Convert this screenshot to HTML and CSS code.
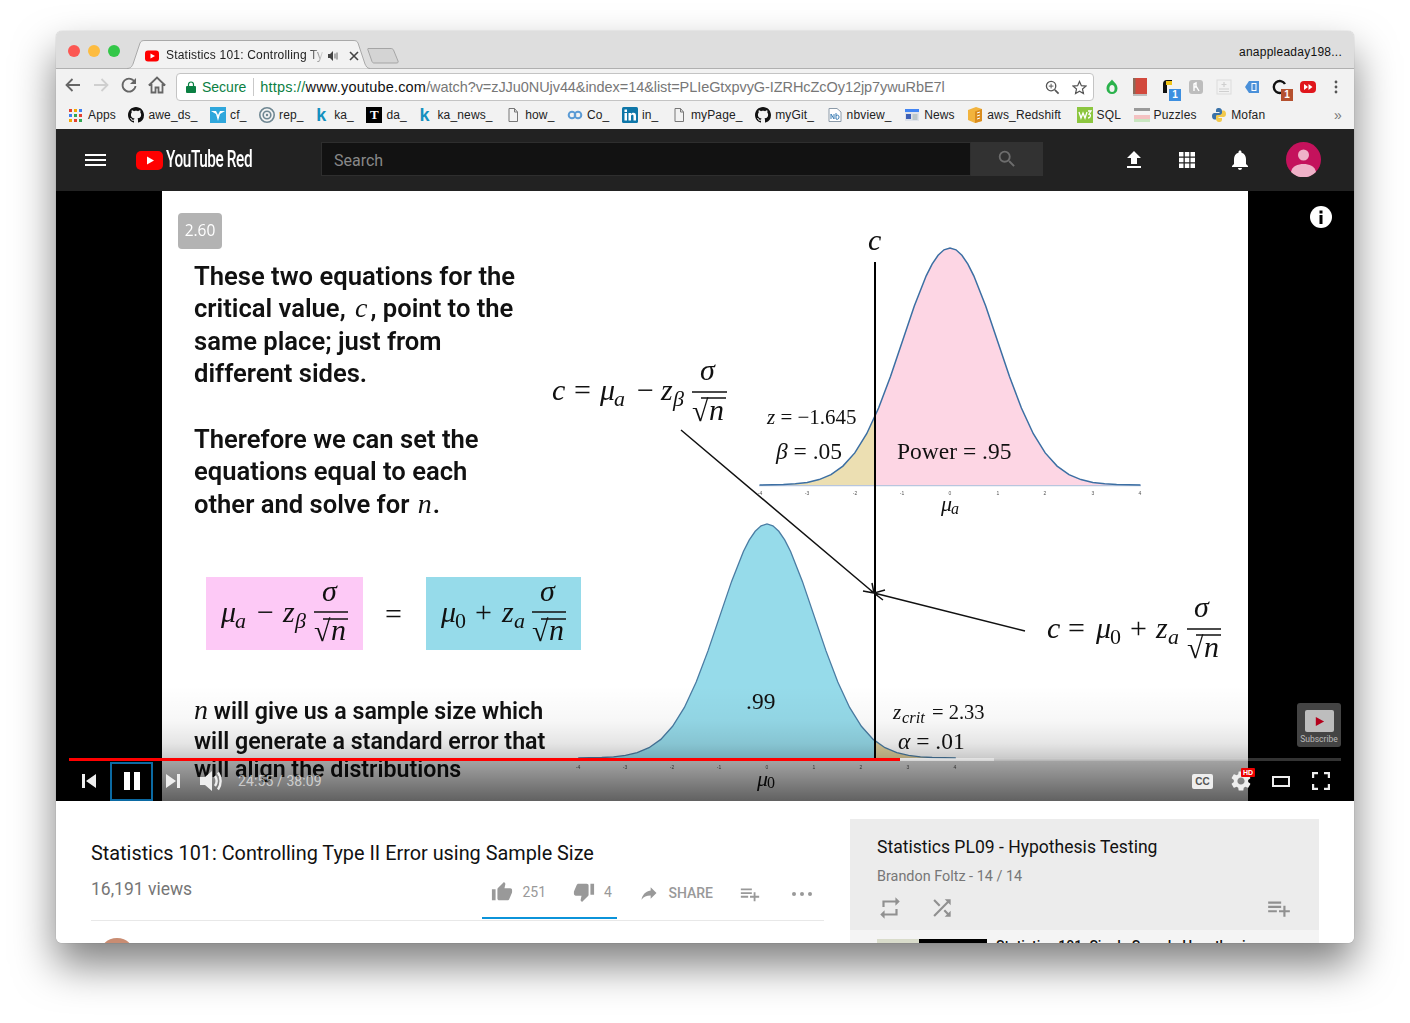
FILE: index.html
```html
<!DOCTYPE html>
<html lang="en">
<head>
<meta charset="utf-8">
<title>Statistics 101: Controlling Type II Error using Sample Size</title>
<link rel="stylesheet" href="styles.css">
</head>
<body>
<div class="window">
  <div class="tabstrip">
    <div class="lights"><span class="light red"></span><span class="light yellow"></span><span class="light green"></span></div>
    <div class="tab">
      <svg class="tab-shape" viewBox="0 0 243 29" preserveAspectRatio="none"><path d="M0 28.5C4 28.5 5 26 6 24L13 3C14 1 15 .5 18 .5H226C229 .5 230 1 231 3L238 24C239 26 240 28.5 243 28.5" fill="#f2f2f2" stroke="#a9a9a9"/></svg>
      <svg class="tab-fav" viewBox="0 0 14 14"><rect y="1.5" width="14" height="11" rx="3" fill="#f00"/><path d="M5.5 4.5v5L10 7z" fill="#fff"/></svg>
      <span class="tab-title">Statistics 101: Controlling Ty</span>
      <svg class="tab-audio" viewBox="0 0 12 12"><path d="M1 4h2l3-3v10L3 8H1z" fill="#444"/><path d="M8 3.500v5M10 2.500v7" stroke="#666" fill="none"/></svg>
      <svg class="tab-close" viewBox="0 0 10 10"><path d="M1 1l8 8M9 1l-8 8" stroke="#444" stroke-width="1.600"/></svg>
    </div>
    <svg class="newtab" viewBox="0 0 32 17"><path d="M1 1.500H24C25 1.500 26 2 26.500 3L31 14C31.500 15.500 31 16 29 16H7C6 16 5.500 15.500 5 14.500L.8 2.500C.6 2 .6 1.500 1 1.500z" fill="#d4d4d4" stroke="#a5a5a5"/></svg>
    <span class="profile">anappleaday198...</span>
  </div>

  <div class="toolbar">
    <div class="nav">
      <svg class="nav-btn" viewBox="0 0 18 18"><path d="M16 9H3M8.500 3L2.500 9l6 6" fill="none" stroke="#666" stroke-width="1.800"/></svg>
      <svg class="nav-btn" viewBox="0 0 18 18"><path d="M2 9h13M9.500 3l6 6-6 6" fill="none" stroke="#cfcfcf" stroke-width="1.800"/></svg>
      <svg class="nav-btn" viewBox="0 0 18 18"><path d="M15 6.500A6.500 6.500 0 1 0 15.500 10" fill="none" stroke="#666" stroke-width="1.800"/><path d="M16 2v6h-6z" fill="#666"/></svg>
      <svg class="nav-btn" viewBox="0 0 18 18"><path d="M.8 9.500L9 1.500l8.200 8M3.500 8v8.500h4v-5h3v5h4V8" fill="none" stroke="#666" stroke-width="1.800"/></svg>
    </div>
    <div class="omnibox">
      <svg class="lock" viewBox="0 0 10 12"><path d="M2.500 5V3.500a2.500 2.500 0 0 1 5 0V5" fill="none" stroke="#0b8043" stroke-width="1.200"/><rect y="5" width="10" height="7" rx="1" fill="#0b8043"/></svg>
      <span class="secure">Secure</span>
      <span class="omni-sep"></span>
      <span class="url"><span class="url-scheme">https://</span><span class="url-host">www.youtube.com</span>/watch?v=zJJu0NUjv44&amp;index=14&amp;list=PLIeGtxpvyG-IZRHcZcOy12jp7ywuRbE7l</span>
      <svg class="omni-icon" viewBox="0 0 16 16"><circle cx="6.500" cy="6.500" r="5" fill="none" stroke="#555" stroke-width="1.400"/><path d="M10.500 10.500l4 4" stroke="#555" stroke-width="1.800"/><path d="M4 6.500h5M6.500 4v5" stroke="#555"/></svg>
      <svg class="omni-icon" viewBox="0 0 16 16"><path d="M8 1.500l2 4.500 4.800.5-3.600 3.200 1 4.800L8 12l-4.200 2.500 1-4.800L1.200 6.500 6 6z" fill="none" stroke="#555" stroke-width="1.300"/></svg>
    </div>
    <div class="extensions">
      <span class="ext"><svg viewBox="0 0 16 16"><path d="M8 .5C9 2.500 13.500 4.500 13.500 9.500A5.500 5.500 0 0 1 2.500 9.500C2.500 4.500 7 2.500 8 .5z" fill="#2bb24c"/><ellipse cx="8" cy="9.500" rx="2.600" ry="3.600" fill="#f2f2f2"/></svg></span>
      <span class="ext"><svg class="ext-tall" viewBox="0 0 14 18"><rect x="0" y="0" width="14" height="16" fill="#d2493d"/><rect x="0" y="0" width="2.500" height="16" fill="#8a6a58"/><rect x="0" y="16" width="14" height="2" fill="#bdbdbd"/></svg></span>
      <span class="ext"><svg viewBox="0 0 16 16"><path d="M3 14V5a4 4 0 0 1 4-4h5v5H7v8z" fill="#111"/><rect x="6" y="2" width="6" height="4" fill="#f0c419"/></svg><b class="badge blue">1</b></span>
      <span class="ext"><svg viewBox="0 0 16 16"><rect x="1" y="1" width="14" height="14" rx="3" fill="#bdbdbd"/><path d="M6 12V5l2-1v3l3 5M6 8h3" fill="none" stroke="#fff" stroke-width="1.400"/></svg></span>
      <span class="ext"><svg viewBox="0 0 16 16"><rect x="1" y="1" width="14" height="14" fill="#f2f2f2" stroke="#dcdcdc"/><path d="M8 3v5M5.500 5.500h5M3 10h10M3 12.500h10" stroke="#cfcfcf" stroke-width="1.200"/></svg></span>
      <span class="ext"><svg viewBox="0 0 16 16"><path d="M5 2h10v12H5L1 8z" fill="#4a90d9"/><rect x="8" y="4.500" width="4" height="7" fill="none" stroke="#fff"/></svg></span>
      <span class="ext"><svg viewBox="0 0 16 16"><path d="M13 5A6 6 0 1 0 13 11" fill="none" stroke="#111" stroke-width="2.400"/></svg><b class="badge rust">1</b></span>
      <span class="ext"><svg viewBox="0 0 16 16"><rect x="0" y="2" width="16" height="12" rx="4" fill="#e0161c"/><path d="M4 5v6l4-3zM8.500 5v6l4-3z" fill="#fff"/></svg></span>
      <span class="ext"><svg viewBox="0 0 16 16"><circle cx="8" cy="3" r="1.400" fill="#555"/><circle cx="8" cy="8" r="1.400" fill="#555"/><circle cx="8" cy="13" r="1.400" fill="#555"/></svg></span>
    </div>
  </div>

  <div class="bookmarks">
    <span class="bm bm-apps"><svg viewBox="0 0 13 13"><rect width="3" height="3" fill="#e5402f"/><rect x="5" width="3" height="3" fill="#f6a800"/><rect x="10" width="3" height="3" fill="#3e7ff0"/><rect y="5" width="3" height="3" fill="#3e7ff0"/><rect x="5" y="5" width="3" height="3" fill="#31a853"/><rect x="10" y="5" width="3" height="3" fill="#e5402f"/><rect y="10" width="3" height="3" fill="#f6a800"/><rect x="5" y="10" width="3" height="3" fill="#e5402f"/><rect x="10" y="10" width="3" height="3" fill="#31a853"/></svg>Apps</span>
    <span class="bm"><svg viewBox="0 0 16 16"><path fill="#111" d="M8 0C3.580 0 0 3.580 0 8c0 3.540 2.290 6.530 5.470 7.590.4.070.55-.17.55-.38 0-.19-.01-.82-.01-1.490-2.010.37-2.530-.49-2.690-.94-.09-.23-.48-.94-.82-1.130-.28-.15-.68-.52-.01-.53.63-.01 1.080.58 1.230.82.72 1.210 1.870.87 2.330.66.070-.52.28-.87.51-1.070-1.780-.2-3.640-.89-3.640-3.950 0-.87.31-1.590.82-2.150-.08-.2-.36-1.020.08-2.120 0 0 .67-.21 2.200.82.64-.18 1.320-.27 2-.27s1.360.09 2 .27c1.530-1.040 2.200-.82 2.200-.82.44 1.100.16 1.920.08 2.120.51.56.82 1.270.82 2.150 0 3.070-1.870 3.750-3.650 3.950.29.25.54.73.54 1.480 0 1.070-.01 1.930-.01 2.200 0 .21.15.46.55.38A8.010 8.010 0 0016 8c0-4.420-3.580-8-8-8z"/></svg>awe_ds_</span>
    <span class="bm"><svg viewBox="0 0 16 16"><rect width="16" height="16" fill="#2fa7dc"/><path d="M1 4h5l2 4 2-4h5l-5 3-2 7-2-7z" fill="#fff"/></svg>cf_</span>
    <span class="bm"><svg viewBox="0 0 16 16"><circle cx="8" cy="8" r="7.200" fill="none" stroke="#6f8792" stroke-width="1.600"/><circle cx="8" cy="8" r="3.800" fill="none" stroke="#6f8792" stroke-width="1.600"/><circle cx="8" cy="8" r="1.200" fill="#6f8792"/></svg>rep_</span>
    <span class="bm"><i class="k-mark">k</i>ka_</span>
    <span class="bm"><i class="t-mark">T</i>da_</span>
    <span class="bm"><i class="k-mark">k</i>ka_news_</span>
    <span class="bm"><svg class="page" viewBox="0 0 14 16"><path d="M3 1.500h5.500L11.500 5v9.500H3z M8.500 1.500V5h3" fill="none" stroke="#777"/></svg>how_</span>
    <span class="bm"><svg viewBox="0 0 16 16"><circle cx="5" cy="8" r="3.300" fill="none" stroke="#5b9bd5" stroke-width="2"/><circle cx="11" cy="8" r="3.300" fill="none" stroke="#5b9bd5" stroke-width="2"/></svg>Co_</span>
    <span class="bm"><svg viewBox="0 0 16 16"><rect width="16" height="16" rx="1.500" fill="#0e76a8"/><rect x="2.500" y="6" width="2.500" height="7.500" fill="#fff"/><rect x="2.500" y="2.500" width="2.500" height="2.500" fill="#fff"/><path d="M6.500 6H9v1.200C9.600 6.300 10.500 5.800 11.500 5.800c1.700 0 2.500 1.200 2.500 3v4.700h-2.500V9.200c0-.9-.4-1.400-1.200-1.400S9 8.400 9 9.200v4.300H6.500z" fill="#fff"/></svg>in_</span>
    <span class="bm"><svg class="page" viewBox="0 0 14 16"><path d="M3 1.500h5.500L11.500 5v9.500H3z M8.500 1.500V5h3" fill="none" stroke="#777"/></svg>myPage_</span>
    <span class="bm"><svg viewBox="0 0 16 16"><path fill="#111" d="M8 0C3.580 0 0 3.580 0 8c0 3.540 2.290 6.530 5.470 7.590.4.070.55-.17.55-.38 0-.19-.01-.82-.01-1.490-2.010.37-2.530-.49-2.690-.94-.09-.23-.48-.94-.82-1.130-.28-.15-.68-.52-.01-.53.63-.01 1.080.58 1.230.82.72 1.210 1.870.87 2.330.66.070-.52.28-.87.51-1.070-1.780-.2-3.640-.89-3.640-3.950 0-.87.31-1.590.82-2.150-.08-.2-.36-1.020.08-2.120 0 0 .67-.21 2.200.82.64-.18 1.320-.27 2-.27s1.360.09 2 .27c1.530-1.040 2.200-.82 2.200-.82.44 1.100.16 1.920.08 2.120.51.56.82 1.270.82 2.150 0 3.070-1.870 3.750-3.650 3.950.29.25.54.73.54 1.480 0 1.070-.01 1.930-.01 2.200 0 .21.15.46.55.38A8.010 8.010 0 0016 8c0-4.420-3.580-8-8-8z"/></svg>myGit_</span>
    <span class="bm"><svg viewBox="0 0 16 16"><path d="M2 1.500h8L14 5v9.500H2z" fill="#fff" stroke="#8c9aa8"/><path d="M4 12V7l3 5V7M9 6v6c2 1 3-.5 3-2s-1-2.500-3-1.500" fill="none" stroke="#3f7fb5"/></svg>nbview_</span>
    <span class="bm"><svg viewBox="0 0 16 16"><rect x="1" y="2" width="14" height="3" fill="#4285f4"/><rect x="1" y="5" width="14" height="9" fill="#dfe3ea"/><rect x="2" y="7" width="5" height="5" fill="#3d5fb5"/><path d="M8.500 8h5M8.500 10h5M8.500 12h5" stroke="#9aa"/></svg>News</span>
    <span class="bm"><svg viewBox="0 0 16 16"><path d="M1 3l8-3 6 2v12l-7 2-7-3z" fill="#f2b33d"/><path d="M8 4.500l7-2.500v12l-7 2z" fill="#d98c1f"/><path d="M10 6l3-1M10 9l3-1M10 12l3-1" stroke="#fff"/></svg>aws_Redshift</span>
    <span class="bm bm-wide"><svg viewBox="0 0 16 16"><rect width="16" height="16" fill="#8cc63f"/><path d="M2 5l2 6 2-5 2 5 2-6M11 4h3l-2 3c2 0 2 4-1 4" fill="none" stroke="#fff" stroke-width="1.300"/></svg>SQL</span>
    <span class="bm"><svg viewBox="0 0 16 16"><rect y="1" width="16" height="3" fill="#9a9a9a"/><rect y="4" width="16" height="4" fill="#f5f5f5"/><rect y="8" width="16" height="4" fill="#f4c2c2"/><rect y="12" width="16" height="3" fill="#c8e6c0"/></svg>Puzzles</span>
    <span class="bm bm-mofan"><svg viewBox="0 0 16 16"><path d="M8 1C5 1 5 2.500 5 4v1h3.500v1H3.500C2 6 1 7 1 9s1 3.500 2.500 3.500H5V10.500C5 9 6 8 7.500 8h2C11 8 11 7 11 6V4c0-1.500-1-3-3-3z" fill="#3a72a8"/><path d="M8 15c3 0 3-1.500 3-3v-1H7.500v-1h5C14 10 15 9 15 7s-1-3.500-2.500-3.500H11V5.500C11 7 10 8 8.500 8h-2C5 8 5 9 5 10v2c0 1.500 1 3 3 3z" fill="#f2c94c"/></svg>Mofan</span>
    <span class="bm-more">»</span>
  </div>

  <header class="yt-header">
    <svg class="burger" viewBox="0 0 21 12"><path d="M0 1h21M0 6h21M0 11h21" stroke="#fff" stroke-width="2"/></svg>
    <div class="logo">
      <svg class="logo-mark" viewBox="0 0 27 19"><rect width="27" height="19" rx="5" fill="#f00"/><path d="M11 5.500v8l7-4z" fill="#fff"/></svg>
      <span class="logo-text">YouTube Red</span>
    </div>
    <div class="search">
      <span class="search-input">Search</span>
      <span class="search-btn"><svg viewBox="0 0 24 24"><path fill="#6d6d6d" d="M15.500 14h-.79l-.28-.27A6.470 6.470 0 0 0 16 9.500 6.500 6.500 0 1 0 9.500 16c1.610 0 3.090-.59 4.230-1.570l.27.28v.79l5 4.990L20.490 19l-4.990-5zm-6 0C7.010 14 5 11.990 5 9.500S7.010 5 9.500 5 14 7.010 14 9.500 11.990 14 9.500 14z"/></svg></span>
    </div>
    <div class="header-icons">
      <svg viewBox="0 0 24 24"><path fill="#fff" d="M9 16h6v-6h4l-7-7-7 7h4zm-4 2h14v2H5z"/></svg>
      <svg viewBox="0 0 24 24"><path fill="#fff" d="M4 4h4.500v4.500H4zM9.800 4h4.500v4.500H9.800zM15.500 4H20v4.500h-4.500zM4 9.800h4.500v4.500H4zM9.800 9.800h4.500v4.500H9.800zM15.500 9.800H20v4.500h-4.500zM4 15.500h4.500V20H4zM9.800 15.500h4.500V20H9.800zM15.500 15.500H20V20h-4.500z"/></svg>
      <svg viewBox="0 0 24 24"><path fill="#fff" d="M12 22c1.100 0 2-.9 2-2h-4c0 1.100.9 2 2 2zm6-6v-5c0-3.070-1.630-5.640-4.500-6.320V4c0-.83-.67-1.500-1.500-1.500s-1.500.67-1.500 1.500v.68C7.640 5.360 6 7.920 6 11v5l-2 2v1h16v-1l-2-2z"/></svg>
      <svg class="avatar-me" viewBox="0 0 35 35"><circle cx="17.500" cy="17.500" r="17.500" fill="#c4125c"/><circle cx="17.500" cy="13" r="5.500" fill="#efb2c8"/><path d="M5 30c1-6 7-8 12.500-8S29 24 30 30a17.500 17.500 0 0 1-25 0z" fill="#efb2c8"/></svg>
    </div>
  </header>

  <section class="player">
    <svg class="slide" viewBox="162 191 1086 610">
      <defs>
        <path id="curve-a" d="M759.600 485L783.400 484.500 795.300 483.800 807.200 482.400 819.100 479.600 831 474.600 842.900 466.100 854.800 452.900 866.700 433.700 878.600 408 890.500 376.500 902.400 341.300 914.300 306.100 926.200 275.800 932.100 264.100 938.100 255.300 944 249.800 950 248 956 249.800 961.900 255.300 967.900 264.100 973.800 275.800 985.700 306.100 997.600 341.300 1009.500 376.500 1021.400 408 1033.300 433.700 1045.200 452.900 1057.100 466.100 1069 474.600 1080.900 479.600 1092.800 482.400 1104.700 483.800 1116.600 484.500 1140.400 485"/>
        <path id="curve-b" d="M578.200 758L601.800 757.500 613.600 756.800 625.400 755.400 637.200 752.700 649 747.700 660.800 739.400 672.600 726.300 684.400 707.400 696.200 682 708 650.900 719.800 616.100 731.600 581.400 743.400 551.500 749.300 539.900 755.200 531.300 761.100 525.800 767 524 772.900 525.800 778.800 531.300 784.700 539.900 790.600 551.500 802.400 581.400 814.200 616.100 826 650.900 837.800 682 849.600 707.400 861.400 726.300 873.200 739.400 885 747.700 896.800 752.700 908.600 755.400 920.400 756.800 932.200 757.500 955.800 758"/>
        <clipPath id="left-of-c"><rect x="500" y="200" width="375" height="600"/></clipPath>
        <clipPath id="right-of-c"><rect x="875" y="200" width="375" height="600"/></clipPath>
      </defs>
      <rect x="162" y="191" width="1086" height="610" fill="#fff"/>

      <rect class="badge-bg" x="178" y="213" width="44" height="36" rx="4"/>
      <text class="badge-text" x="200" y="236">2.60</text>

      <text class="lead" x="194" y="285">These two equations for the</text>
      <text class="lead" x="194" y="317">critical value, <tspan class="lead-math" dx="3">c</tspan><tspan dx="3">, point to the</tspan></text>
      <text class="lead" x="194" y="350">same place; just from</text>
      <text class="lead" x="194" y="382">different sides.</text>
      <text class="lead" x="194" y="448">Therefore we can set the</text>
      <text class="lead" x="194" y="480">equations equal to each</text>
      <text class="lead" x="194" y="513">other and solve for <tspan class="lead-math" dx="2">n</tspan><tspan dx="1">.</tspan></text>
      <text class="lead-sm" x="194" y="719"><tspan class="lead-math">n</tspan> will give us a sample size which</text>
      <text class="lead-sm" x="194" y="749">will generate a standard error that</text>
      <text class="lead-sm" x="194" y="777">will align the distributions</text>

      <rect x="206" y="577" width="157" height="73" fill="#fdc9f6"/>
      <rect x="426" y="577" width="155" height="73" fill="#96dbea"/>
      <text class="m big" x="221" y="622">μ</text><text class="m sub" x="235" y="628">a</text>
      <text class="u big" x="257" y="622">−</text>
      <text class="m big" x="283" y="622">z</text><text class="m sub" x="295" y="628">β</text>
      <text class="m big" x="322" y="601">σ</text><path class="rule" d="M314 612h34M323 619h25"/>
      <text class="u big" x="314" y="641">√</text><text class="m big" x="331" y="640">n</text>
      <text class="u big" x="385" y="624">=</text>
      <text class="m big" x="441" y="622">μ</text><text class="u sub" x="455" y="628">0</text>
      <text class="u big" x="475" y="622">+</text>
      <text class="m big" x="502" y="622">z</text><text class="m sub" x="514" y="628">a</text>
      <text class="m big" x="540" y="601">σ</text><path class="rule" d="M532 612h34M541 619h25"/>
      <text class="u big" x="532" y="641">√</text><text class="m big" x="549" y="640">n</text>

      <path d="M759 485.500H1141" stroke="#b8c6de" stroke-width="1.500"/>
      <use href="#curve-a" fill="#fdd6e4" clip-path="url(#right-of-c)"/>
      <use href="#curve-a" fill="#ecdfb2" clip-path="url(#left-of-c)"/>
      <use href="#curve-a" fill="none" stroke="#3c6fa3" stroke-width="1.500"/>
      <use href="#curve-b" fill="#96dbea" clip-path="url(#left-of-c)"/>
      <use href="#curve-b" fill="#dfcf9c" clip-path="url(#right-of-c)"/>
      <use href="#curve-b" fill="none" stroke="#4a7ca3" stroke-width="1.300"/>

      <g class="ticks">
        <text x="760" y="495">-4</text><text x="807" y="495">-3</text><text x="855" y="495">-2</text><text x="902" y="495">-1</text><text x="950" y="495">0</text><text x="998" y="495">1</text><text x="1045" y="495">2</text><text x="1093" y="495">3</text><text x="1140" y="495">4</text>
        <text x="578" y="769">-4</text><text x="625" y="769">-3</text><text x="672" y="769">-2</text><text x="719" y="769">-1</text><text x="767" y="769">0</text><text x="814" y="769">1</text><text x="861" y="769">2</text><text x="908" y="769">3</text><text x="955" y="769">4</text>
      </g>

      <path d="M875 262V758" stroke="#000" stroke-width="2"/>
      <path class="arrow" d="M681 430L874 593M863 591L874 593 872 583M1025 631L874 593M885 590L874 593 883 600"/>

      <text class="m big" x="868" y="250">c</text>
      <text class="m big" x="552" y="400">c</text><text class="u big" x="574" y="400">=</text>
      <text class="m big" x="600" y="400">μ</text><text class="m sub" x="614" y="406">a</text>
      <text class="u big" x="637" y="400">−</text>
      <text class="m big" x="661" y="400">z</text><text class="m sub" x="673" y="406">β</text>
      <text class="m big" x="700" y="380">σ</text><path class="rule" d="M692 392h35M701 398h25"/>
      <text class="u big" x="692" y="421">√</text><text class="m big" x="709" y="420">n</text>

      <text class="m big" x="1047" y="638">c</text><text class="u big" x="1068" y="638">=</text>
      <text class="m big" x="1096" y="638">μ</text><text class="u sub" x="1110" y="644">0</text>
      <text class="u big" x="1130" y="638">+</text>
      <text class="m big" x="1156" y="638">z</text><text class="m sub" x="1168" y="644">a</text>
      <text class="m big" x="1194" y="617">σ</text><path class="rule" d="M1187 629h34M1196 635h25"/>
      <text class="u big" x="1187" y="658">√</text><text class="m big" x="1204" y="657">n</text>

      <text class="u note" x="767" y="424"><tspan class="i">z</tspan> = −1.645</text>
      <text class="u lab" x="776" y="459"><tspan class="i">β</tspan> = .05</text>
      <text class="u lab" x="897" y="459">Power = .95</text>
      <text class="m lab-mu" x="941" y="511">μ</text><text class="m lab-sub" x="951" y="514">a</text>
      <text class="u lab" x="746" y="709">.99</text>
      <text class="m note" x="893" y="719">z</text><text class="m crit" x="902" y="723">crit</text><text class="u crit-eq" x="932" y="719">= 2.33</text>
      <text class="u lab" x="898" y="749"><tspan class="i">α</tspan> = .01</text>
      <text class="m lab-mu" x="757" y="786">μ</text><text class="u lab-sub" x="767" y="788">0</text>
    </svg>

    <div class="shade"></div>

    <svg class="info" viewBox="0 0 24 24"><circle cx="12" cy="12" r="11" fill="#fff"/><rect x="10.500" y="10" width="3" height="9" fill="#000"/><rect x="10.500" y="5.500" width="3" height="3" fill="#000"/></svg>

    <div class="watermark">
      <span class="wm-box"><svg viewBox="0 0 12 12"><path d="M2 1v10l9-5z" fill="#b3001b"/></svg></span>
      <span class="wm-label">Subscribe</span>
    </div>

    <div class="chrome">
      <div class="progress">
        <span class="buffered"></span>
        <span class="played"></span>
      </div>
      <div class="controls">
        <svg class="ctl-prev" viewBox="0 0 16 14"><path d="M1 0h3v14H1zM15 0v14L5 7z" fill="#eee"/></svg>
        <span class="ctl-pause"><svg viewBox="0 0 16 18"><path d="M0 0h6v18H0zM10 0h6v18h-6z" fill="#fff"/></svg></span>
        <svg class="ctl-next" viewBox="0 0 16 14"><path d="M1 0v14l10-7zM12 0h3v14h-3z" fill="#eee"/></svg>
        <svg class="ctl-vol" viewBox="0 0 22 20"><path d="M0 6h5l7-6v20l-7-6H0z" fill="#eee"/><path d="M15 5c2 3 2 7 0 10M18 1.500c3.500 5 3.500 12 0 17" fill="none" stroke="#eee" stroke-width="2.400"/></svg>
        <span class="ctl-time">24:55 / 38:09</span>
        <span class="ctl-right">
          <span class="ctl-cc">CC</span>
          <span class="ctl-gear"><svg viewBox="0 0 24 24"><path fill="#eee" d="M19.140 12.940c.04-.3.06-.61.06-.94 0-.32-.02-.64-.07-.94l2.030-1.580c.18-.14.23-.41.12-.61l-1.920-3.320c-.12-.22-.37-.29-.59-.22l-2.390.96c-.5-.38-1.030-.7-1.620-.94l-.36-2.540c-.04-.24-.24-.41-.48-.41h-3.840c-.24 0-.43.17-.47.41l-.36 2.540c-.59.24-1.130.57-1.620.94l-2.390-.96c-.22-.08-.47 0-.59.22L2.740 8.870c-.12.21-.08.47.12.61l2.030 1.580c-.05.3-.09.63-.09.94s.02.64.07.94l-2.030 1.580c-.18.14-.23.41-.12.61l1.920 3.320c.12.22.37.29.59.22l2.390-.96c.5.38 1.030.7 1.620.94l.36 2.540c.05.24.24.41.48.41h3.840c.24 0 .44-.17.47-.41l.36-2.540c.59-.24 1.130-.56 1.620-.94l2.390.96c.22.08.47 0 .59-.22l1.920-3.320c.12-.22.07-.47-.12-.61l-2.010-1.580zM12 15.600c-1.980 0-3.600-1.620-3.600-3.600s1.620-3.600 3.600-3.600 3.600 1.620 3.600 3.600-1.620 3.600-3.600 3.600z"/></svg><b class="hd">HD</b></span>
          <span class="ctl-theater"></span>
          <svg class="ctl-full" viewBox="0 0 18 18"><path d="M1 6V1h5M12 1h5v5M17 12v5h-5M6 17H1v-5" fill="none" stroke="#eee" stroke-width="2.400"/></svg>
        </span>
      </div>
    </div>
  </section>

  <main class="below">
    <div class="primary">
      <h1 class="video-title">Statistics 101: Controlling Type II Error using Sample Size</h1>
      <div class="stats">
        <span class="views">16,191 views</span>
        <div class="actions">
          <div class="sentiment">
            <svg class="act-thumb" viewBox="0 0 24 24"><path d="M1 21h4V9H1v12zm22-11c0-1.100-.9-2-2-2h-6.310l.95-4.570.03-.32c0-.41-.17-.79-.44-1.060L14.170 1 7.590 7.590C7.220 7.950 7 8.450 7 9v10c0 1.100.9 2 2 2h9c.83 0 1.540-.5 1.840-1.220l3.020-7.050c.09-.23.14-.47.14-.73v-2z"/></svg>
            <span class="act-count like">251</span>
            <svg class="act-thumb" viewBox="0 0 24 24"><path d="M15 3H6c-.83 0-1.540.5-1.840 1.220l-3.020 7.050c-.09.23-.14.47-.14.73v2c0 1.100.9 2 2 2h6.310l-.95 4.570-.03.32c0 .41.17.79.44 1.060L9.830 23l6.590-6.590c.36-.36.58-.86.58-1.410V5c0-1.100-.9-2-2-2zm4 0v12h4V3h-4z"/></svg>
            <span class="act-count">4</span>
          </div>
          <svg class="act-share" viewBox="0 0 24 24"><path d="M14 9V5l7 7-7 7v-4.100c-5 0-8.500 1.600-11 5.100 1-5 4-10 11-11z"/></svg>
          <span class="act-label">SHARE</span>
          <svg class="act-add" viewBox="0 0 24 24"><path d="M14 10H2v2h12v-2zm0-4H2v2h12V6zm4 8v-4h-2v4h-4v2h4v4h2v-4h4v-2h-4zM2 16h8v-2H2v2z"/></svg>
          <svg class="act-more" viewBox="0 0 20 4"><circle cx="2" cy="2" r="2"/><circle cx="10" cy="2" r="2"/><circle cx="18" cy="2" r="2"/></svg>
        </div>
      </div>
      <div class="owner-avatar"></div>
    </div>
    <aside class="playlist">
      <div class="pl-head">
        <div class="pl-title">Statistics PL09 - Hypothesis Testing</div>
        <div class="pl-sub">Brandon Foltz - 14 / 14</div>
        <div class="pl-tools">
          <svg viewBox="0 0 24 24"><path d="M7 7h10v3l4-4-4-4v3H5v6h2V7zm10 10H7v-3l-4 4 4 4v-3h12v-6h-2v4z"/></svg>
          <svg viewBox="0 0 24 24"><path d="M10.590 9.170L5.410 4 4 5.410l5.170 5.170 1.420-1.410zM14.500 4l2.040 2.040L4 18.590 5.410 20 17.960 7.460 20 9.500V4h-5.500zm.33 9.410l-1.410 1.410 3.130 3.130L14.500 20H20v-5.500l-2.040 2.040-3.130-3.130z"/></svg>
          <svg class="pl-add" viewBox="0 0 24 24"><path d="M14 10H2v2h12v-2zm0-4H2v2h12V6zm4 8v-4h-2v4h-4v2h4v4h2v-4h4v-2h-4zM2 16h8v-2H2v2z"/></svg>
        </div>
      </div>
      <div class="pl-item">
        <span class="pl-thumb"><span class="pl-thumb-slide"></span><span class="pl-thumb-black"></span></span>
        <span class="pl-item-title">Statistics 101: Single Sample Hypothesis</span>
      </div>
    </aside>
  </main>
</div>
</body>
</html>
```

FILE: styles.css
```css
* { box-sizing: border-box; }
html, body { margin: 0; height: 100%; background: #fff; overflow: hidden; }
body { padding: 31px 0 0 56px; font-family: "Liberation Sans", Arial, sans-serif; }

.window {
  width: 1298px;
  height: 912px;
  border-radius: 6px;
  overflow: hidden;
  background: #fff;
  box-shadow: 0 22px 42px rgba(0, 0, 0, .5), 0 0 1px rgba(0, 0, 0, .4);
}

/* browser tab strip */
.tabstrip {
  position: relative;
  display: flex;
  align-items: flex-end;
  height: 38px;
  background: #dedede;
  border-bottom: 1px solid #b0b0b0;
}
.lights { display: flex; gap: 8px; padding-left: 12px; align-self: flex-start; margin-top: 14px; width: 71px; }
.light { width: 12px; height: 12px; border-radius: 50%; }
.light.red { background: #fc5753; }
.light.yellow { background: #fdbc40; }
.light.green { background: #33c748; }
.tab {
  position: relative;
  display: flex;
  align-items: center;
  width: 243px;
  height: 29px;
  margin-bottom: -1px;
  padding: 0 0 0 18px;
  z-index: 1;
}
.tab-shape { position: absolute; inset: 0; width: 100%; height: 100%; }
.tab-fav { position: relative; width: 14px; height: 14px; flex: none; margin-top: 2px; }
.tab-title {
  position: relative;
  width: 162px;
  margin-left: 7px;
  font-size: 12px;
  letter-spacing: .2px;
  color: #222;
  white-space: nowrap;
  -webkit-mask-image: linear-gradient(90deg, #000 88%, transparent 98%);
  mask-image: linear-gradient(90deg, #000 88%, transparent 98%);
}
.tab-audio { position: relative; width: 12px; height: 12px; flex: none; margin-left: -1px; margin-top: 2px; }
.tab-close { position: relative; width: 10px; height: 10px; flex: none; margin-left: 10px; margin-top: 2px; }
.newtab { width: 32px; height: 17px; margin: 0 0 4px -3px; }
.profile { margin-left: auto; align-self: flex-start; margin-top: 14px; padding-right: 12px; font-size: 12px; letter-spacing: .25px; color: #111; }

/* toolbar */
.toolbar { display: flex; align-items: center; height: 32px; background: #f2f2f2; }
.nav { display: flex; padding-left: 3px; }
.nav-btn { width: 18px; height: 18px; margin: 0 5px; }
.omnibox {
  display: flex;
  align-items: center;
  width: 918px;
  height: 28px;
  margin: 4px 0 0 5px;
  padding: 0 6px 0 9px;
  background: #fff;
  border: 1px solid #c4c4c4;
  border-radius: 4px;
  font-size: 14px;
  white-space: nowrap;
}
.lock { width: 10px; height: 12px; flex: none; }
.secure { margin-left: 6px; color: #0b8043; }
.omni-sep { width: 1px; height: 18px; background: #c9c9c9; margin: 0 6px 0 7px; }
.url { color: #777; flex: 1; overflow: hidden; font-size: 14.500px; letter-spacing: -.07px; }
.url-scheme { color: #0b8043; letter-spacing: .2px; }
.url-host { color: #111; letter-spacing: .2px; }
.omni-icon { width: 15px; height: 15px; flex: none; margin-left: 12px; }
.extensions { display: flex; padding-left: 4px; }
.ext { position: relative; display: flex; justify-content: center; align-items: center; width: 28px; height: 28px; margin-top: 4px; }
.ext svg { width: 16px; height: 16px; }
.ext .ext-tall { width: 14px; height: 18px; }
.badge { position: absolute; right: 1px; bottom: 0; width: 12px; height: 12px; font-size: 10px; line-height: 12px; color: #fff; text-align: center; font-weight: 700; }
.badge.blue { background: #3d8fe0; }
.badge.rust { background: #b5512f; }

/* bookmarks */
.bookmarks {
  display: flex;
  align-items: center;
  gap: 12.500px;
  height: 28px;
  padding: 0 12px 0 13px;
  background: #f2f2f2;
  font-size: 12px;
  letter-spacing: .15px;
  color: #222;
  white-space: nowrap;
}
.bm { display: flex; align-items: center; gap: 4px; }
.bm-wide { margin-left: 3px; }
.bm-mofan { margin-left: 2px; }
.bm svg { width: 16px; height: 16px; flex: none; }
.bm-apps svg { width: 13px; height: 13px; margin-right: 2px; }
.k-mark { display: inline-block; width: 12px; font: 700 18px/16px "Liberation Sans", sans-serif; color: #1590bf; font-style: normal; margin-right: 2px; }
.t-mark { display: inline-block; width: 16px; height: 16px; background: #000; color: #fff; font: 700 13px/16px "Liberation Serif", serif; font-style: normal; text-align: center; }
.bm-more { margin-left: auto; color: #777; font-size: 14px; }

/* YouTube masthead */
.yt-header { display: flex; align-items: center; height: 62px; padding-left: 29px; background: #222; }
.burger { width: 21px; height: 12px; flex: none; }
.logo { display: flex; align-items: center; width: 185px; margin-left: 30px; flex: none; }
.logo-mark { width: 27px; height: 19px; flex: none; }
.logo-text {
  margin-left: 3px;
  font: 500 23px/24px Roboto, sans-serif;
  letter-spacing: -.6px;
  color: #fff;
  white-space: nowrap;
  transform: scaleX(.667);
  transform-origin: left center;
}
.search { display: flex; width: 722px; height: 34px; margin-bottom: 2px; flex: none; }
.search-input {
  flex: 1;
  padding: 1px 12px 0;
  background: #121212;
  border: 1px solid #2e2e2e;
  font: 400 16px/34px Roboto, sans-serif;
  color: #888;
}
.search-btn { display: flex; align-items: center; justify-content: center; width: 72px; background: #323232; }
.search-btn svg { width: 22px; height: 22px; }
.header-icons { display: flex; align-items: center; gap: 29px; margin-left: auto; margin-bottom: 1px; padding-right: 33px; }
.header-icons svg { width: 24px; height: 24px; }
.header-icons .avatar-me { width: 35px; height: 35px; margin-left: 5px; }

/* player */
.player { position: relative; display: flex; justify-content: center; height: 610px; background: #000; overflow: hidden; }
.slide { width: 1086px; height: 610px; filter: blur(.3px); }
.shade {
  position: absolute;
  left: 0;
  right: 0;
  bottom: 0;
  height: 115px;
  background: linear-gradient(180deg, rgba(0,0,0,0), rgba(0,0,0,.03) 30%, rgba(0,0,0,.1) 50%, rgba(0,0,0,.2) 62%, rgba(0,0,0,.36) 65%, rgba(0,0,0,.62));
}
.info { position: absolute; top: 14px; right: 21px; width: 24px; height: 24px; }
.watermark {
  position: absolute;
  top: 512px;
  right: 13px;
  width: 44px;
  height: 44px;
  display: flex;
  flex-direction: column;
  align-items: center;
  border-radius: 3px;
  background: #444;
}
.wm-box { display: flex; align-items: center; justify-content: center; width: 29px; height: 22px; margin-top: 7px; background: #bdbdbd; border-radius: 2px; }
.wm-box svg { width: 11px; height: 11px; }
.wm-label { margin-top: 2px; font: 400 8.500px/10px Roboto, sans-serif; color: #bbb; }
.chrome { position: absolute; left: 13px; right: 13px; bottom: 0; height: 43px; }
.progress { position: relative; height: 3px; background: rgba(255,255,255,.2); }
.played { position: absolute; left: 0; top: 0; bottom: 0; width: 831px; background: #f00; }
.buffered { position: absolute; left: 0; top: 0; bottom: 0; width: 925px; background: rgba(255,255,255,.45); }
.controls { display: flex; align-items: center; height: 40px; }
.ctl-prev { width: 16px; height: 14px; margin-left: 12px; flex: none; }
.ctl-pause {
  display: flex;
  align-items: center;
  justify-content: center;
  width: 43px;
  height: 39px;
  margin-left: 13px;
  border: 2px solid #0b6aa3;
  flex: none;
}
.ctl-pause svg { width: 16px; height: 18px; }
.ctl-next { width: 16px; height: 14px; margin-left: 12px; flex: none; }
.ctl-vol { width: 22px; height: 20px; margin-left: 19px; flex: none; }
.ctl-time { margin-left: 16px; font: 400 14px/1 Roboto, sans-serif; letter-spacing: .1px; color: rgba(255,255,255,.62); }
.ctl-right { display: flex; align-items: center; margin-left: auto; padding-right: 11px; }
.ctl-cc { width: 21px; height: 15px; background: #eee; border-radius: 2px; font: 700 10px/15px "Liberation Sans", sans-serif; color: #555; text-align: center; }
.ctl-gear { position: relative; width: 24px; height: 24px; margin-left: 16px; }
.ctl-gear svg { width: 24px; height: 24px; }
.hd { position: absolute; top: -1px; left: 12px; width: 14px; height: 9px; background: #e00; border-radius: 1px; font: 700 7px/9px "Liberation Sans", sans-serif; color: #fff; text-align: center; }
.ctl-theater { width: 18px; height: 11px; margin-left: 19px; border: 2px solid #eee; }
.ctl-full { width: 18px; height: 18px; margin-left: 22px; }

/* slide typography */
.badge-bg { fill: #b3b3b3; }
.badge-text { font: 400 15.500px "Open Sans", sans-serif; fill: #fff; text-anchor: middle; }
.lead { font: 600 25.600px Roboto, sans-serif; fill: #111; }
.lead-sm { font: 600 23.200px Roboto, sans-serif; fill: #111; }
.lead-math { font: italic 400 28px "Liberation Serif", serif; }
.m { font-family: "Liberation Serif", serif; font-style: italic; fill: #111; }
.u { font-family: "Liberation Serif", serif; fill: #111; }
.i { font-style: italic; }
.big { font-size: 30px; }
.sub { font-size: 22px; }
.lab { font-size: 23.500px; }
.note { font-size: 21px; }
.crit { font-size: 16.500px; }
.crit-eq { font-size: 20.500px; }
.lab-mu { font-size: 22px; }
.lab-sub { font-size: 16px; }
.rule { fill: none; stroke: #111; stroke-width: 1.500; }
.arrow { fill: none; stroke: #111; stroke-width: 1.500; }
.ticks text { font: 400 5px "Liberation Sans", sans-serif; fill: #555; text-anchor: middle; }

/* below the player */
.below { display: flex; gap: 26px; height: 142px; padding-left: 35px; overflow: hidden; background: #fff; }
.primary { width: 733px; flex: none; padding-top: 41px; }
.video-title { margin: 0; font: 400 19.850px/24px Roboto, sans-serif; color: #111; white-space: nowrap; }
.stats { display: flex; justify-content: space-between; height: 55px; border-bottom: 1px solid #e8e8e8; }
.views { padding-top: 12px; font: 400 17.500px/22px Roboto, sans-serif; color: #767676; }
.actions { display: flex; align-items: center; height: 53px; padding-right: 12px; fill: #999; color: #999; font: 500 14px/1 Roboto, sans-serif; }
.sentiment { display: flex; align-items: center; height: 53px; width: 135px; padding: 0 9px; border-bottom: 2px solid #0b93d9; }
.act-thumb { width: 22px; height: 22px; flex: none; }
.act-count { margin-left: 9px; font-weight: 400; }
.act-count.like { margin-right: 27px; }
.act-share { width: 20px; height: 20px; margin: 0 0 0 22px; }
.act-label { margin: 0 0 0 9px; }
.act-add { width: 22px; height: 22px; margin: 2px 0 0 26px; }
.act-more { width: 20px; height: 4px; margin: 2px 0 0 31px; }
.owner-avatar { width: 36px; height: 36px; margin: 17px 0 0 8px; border-radius: 50%; background: #c98c72; }
.playlist { width: 469px; margin-top: 18px; flex: none; }
.pl-head { height: 111px; padding: 17px 27px 0; background: #ececec; }
.pl-title { font: 400 17.560px/22px Roboto, sans-serif; color: #111; }
.pl-sub { margin-top: 10px; font: 400 14.400px/18px Roboto, sans-serif; color: #777; }
.pl-tools { display: flex; align-items: center; gap: 26px; margin-top: 9px; fill: #909090; }
.pl-tools svg { width: 26px; height: 26px; }
.pl-add { margin-left: auto; }
.pl-item { display: flex; gap: 9px; height: 60px; padding: 9px 27px; background: #f4f4f4; }
.pl-thumb { display: flex; width: 110px; height: 62px; flex: none; }
.pl-thumb-slide { width: 42px; background: #d9dccb; }
.pl-thumb-black { flex: 1; background: #000; }
.pl-item-title { font: 500 14px/14px Roboto, sans-serif; color: #111; white-space: nowrap; }
```
